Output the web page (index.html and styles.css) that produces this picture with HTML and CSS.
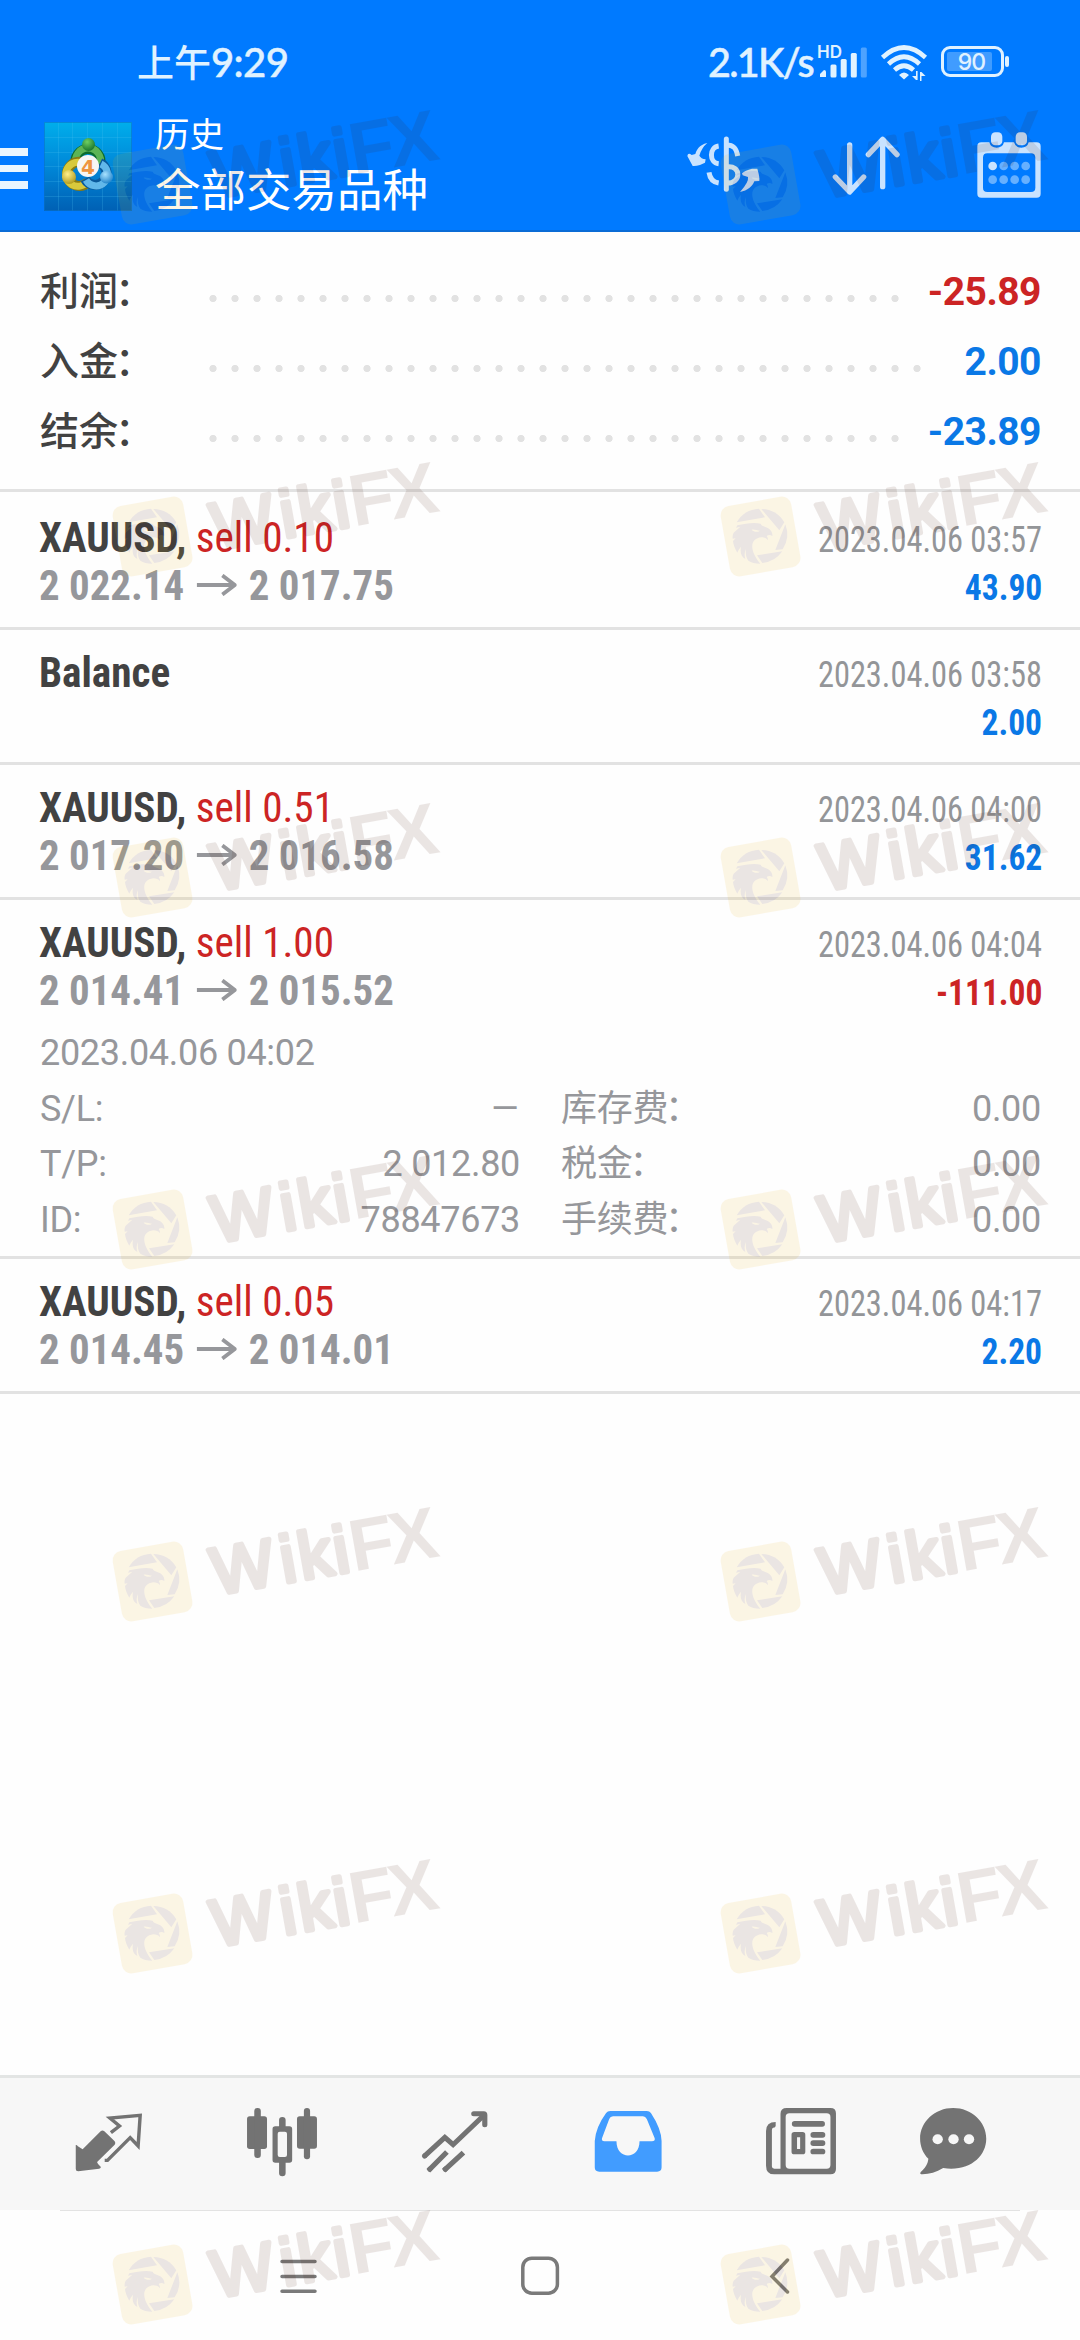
FILE: index.html
```html
<!DOCTYPE html>
<html lang="zh-CN">
<head>
<meta charset="utf-8">
<title>历史</title>
<link rel="stylesheet" href="styles.css">
</head>
<body>
<svg class="defs" width="0" height="0" aria-hidden="true">
  <defs>
    <symbol id="wm" viewBox="0 0 360 160">
      <g class="wm-group">
        <rect class="wm-tile" x="16.800" y="65.800" width="71.500" height="71.500" rx="9.500" transform="rotate(-10 52.5 101.5)"/>
        <g class="wm-ink" transform="scale(.3333)">
          <path d="M86 262A82 82 0 0 1 153 221L171 247Z"/>
          <path d="M160 222A82 82 0 0 1 229 262L214 286Z"/>
          <path d="M232 268A82 82 0 0 1 224 343L202 345Z"/>
          <path d="M223 349A82 82 0 0 1 163 384L147 361Z"/>
          <path fill-rule="evenodd" d="M88 271C112 265 140 261 158 266C161 275 174 274 183 281C191 288 194 295 193 303C186 299 181 300 176 303C179 307 180 311 180 316C176 309 168 307 160 307C142 309 131 320 133 338C135 357 146 372 157 386C141 386 130 382 121 377C114 368 112 356 114 342C109 352 109 362 112 372C99 365 96 352 99 335C94 341 91 345 88 353C80 341 76 328 75 318L83 310L74 311C73 304 74 298 77 293L97 275L84 278ZM131 284C138 291 147 293 156 287C147 287 140 282 131 284Z"/>
        </g>
        <g transform="translate(115 116) rotate(-10)">
          <text class="wm-soft" x="1 70.5 89 124.500" y="-1">Wiki</text>
          <text class="wm-hard" x="141 181" y="0">FX</text>
        </g>
      </g>
    </symbol>
  </defs>
</svg>

<div class="phone">
  <header class="top">
    <div class="status">
      <span class="clock">上午<span class="digits">9:29</span></span>
      <div class="status-right">
        <span class="speed">2.1K/s</span>
        <div class="cell">
          <span class="hd">HD</span>
          <svg width="50" height="36" viewBox="0 0 50 36"><g fill="#e0f2ff"><path d="M1 33V30L5 26Q7 26 7 28V33Z"/><rect x="11.500" y="20.500" width="6" height="13" rx="1.500"/><rect x="21.700" y="15" width="6" height="18.500" rx="1.500"/><rect x="31.800" y="9" width="6" height="24.500" rx="1.500"/><rect opacity=".35" x="41.800" y="3.500" width="6" height="30" rx="1.500"/></g></svg>
        </div>
        <svg class="wifi" width="48" height="38" viewBox="0 0 48 38"><g fill="none" stroke="#e0f2ff" stroke-width="4.600"><path d="M2.500 13.500Q24 -6.500 45.500 13.500"/><path d="M8.500 20Q24 5.500 39.500 20"/><path d="M14.500 26Q24 17.500 33.500 26"/></g><path fill="#e0f2ff" d="M19 31Q24 26 29 31L24 35.500ZM36 27h1.600v9H36l-4-4h4ZM41.500 37H40v-9h1.500l4 4h-4Z"/></svg>
        <div class="battery"><span class="level">90</span></div>
      </div>
    </div>
    <div class="appbar">
      <div class="burger"><i></i><i></i><i></i></div>
      <svg class="logo" width="88" height="89" viewBox="0 0 88 89">
        <defs>
          <linearGradient id="sky" x1="0" y1="0" x2="0" y2="1"><stop offset="0" stop-color="#00aeeb"/><stop offset=".5" stop-color="#0087d8"/><stop offset="1" stop-color="#0060b4"/></linearGradient>
          <radialGradient id="gr" cx=".4" cy=".3" r=".8"><stop offset="0" stop-color="#6fcf62"/><stop offset="1" stop-color="#0f6a26"/></radialGradient>
          <radialGradient id="ye" cx=".4" cy=".3" r=".8"><stop offset="0" stop-color="#fff08a"/><stop offset="1" stop-color="#a89010"/></radialGradient>
          <radialGradient id="bl" cx=".4" cy=".3" r=".8"><stop offset="0" stop-color="#a8e2ff"/><stop offset="1" stop-color="#1279c4"/></radialGradient>
        </defs>
        <rect width="88" height="89" fill="url(#sky)"/>
        <path stroke="#4fc3f0" stroke-opacity=".22" d="M14.500 0V89M28.500 0V89M43.500 0V89M58.500 0V89M73.500 0V89M0 15.500H88M0 30.500H88M0 44.500H88M0 59.500H88M0 74.500H88" fill="none"/>
        <path fill="none" stroke="#0b6b2c" stroke-width="10" d="M32 43A12.500 12.500 0 1 1 56 43"/>
        <path fill="none" stroke="#5cb455" stroke-width="7" d="M32 42A12.500 12.500 0 1 1 56 42"/>
        <path fill="none" stroke="#8a7b12" stroke-width="10" d="M37 40A12 12 0 1 0 44 60"/>
        <path fill="none" stroke="#d8c93c" stroke-width="7" d="M36 40.500A12 12 0 1 0 43 60"/>
        <path fill="none" stroke="#0a5a9c" stroke-width="10" d="M56 41A11.500 11.500 0 1 1 41 57"/>
        <path fill="none" stroke="#62b8ea" stroke-width="7" d="M57 42A11.500 11.500 0 1 1 42 58"/>
        <circle cx="44.500" cy="22.500" r="6.500" fill="url(#gr)"/>
        <circle cx="25" cy="55" r="7" fill="url(#ye)"/>
        <circle cx="62.500" cy="55" r="6.500" fill="url(#bl)"/>
        <circle cx="44" cy="44" r="11" fill="#f7f6f4"/>
        <text class="four" x="44" y="51.500">4</text>
        <rect x=".5" y=".5" width="87" height="88" fill="none" stroke="#0a6fc8" stroke-opacity=".6"/>
      </svg>
      <div class="heads">
        <div class="h-small">历史</div>
        <div class="h-big">全部交易品种</div>
      </div>
      <div class="actions">
        <svg width="74" height="58" viewBox="136 408 222 174"><g fill="none" stroke="#c9e3ff" stroke-width="15"><path d="M231 438C202 442 202 488 231 491"/><path d="M202 517Q206 545 231 549"/><path stroke-linecap="round" d="M254 417V568"/><path d="M254 435C276 435 284 445 288 468M254 501C300 493 300 552 254 549"/></g><path fill="#c9e3ff" d="M197 429C172 434 164 452 161 462L150 465Q139 456 137 468L153 498Q162 499 175 495L190 488L192 478Q178 476 173 467Q180 443 197 429ZM295 576C318 572 332 560 338 544L353 543Q355 533 347 506L331 506Q310 511 301 520L303 526L319 531Q322 546 295 576Z"/></svg>
        <svg width="70" height="62" viewBox="570 404 210 186"><g fill="none" stroke="#c9e3ff" stroke-width="16" stroke-linecap="round" stroke-linejoin="round"><path d="M626 434V574M583 530L626 575L668 530M725 559V418M682 463L725 417L768 463"/></g></svg>
        <svg width="66" height="68" viewBox="1006 392 198 204"><path fill="#c9e3ff" fill-rule="evenodd" d="M1022 426H1046Q1050 442 1068 442Q1086 442 1090 426H1120Q1124 442 1142 442Q1160 442 1164 426H1188Q1200 426 1200 438V580Q1200 592 1188 592H1022Q1010 592 1010 580V438Q1010 426 1022 426ZM1040 459Q1027 459 1027 472V562Q1027 575 1040 575H1171Q1184 575 1184 562V472Q1184 459 1171 459Z"/><g fill="#c9e3ff"><rect x="1051" y="396" width="34" height="39" rx="13"/><rect x="1125" y="396" width="34" height="39" rx="13"/><circle cx="1056" cy="497" r="13"/></g><g fill="#66b0ff"><circle cx="1089" cy="497" r="13"/><circle cx="1122" cy="497" r="13"/><circle cx="1155" cy="497" r="13"/><circle cx="1056" cy="538" r="13"/><circle cx="1089" cy="538" r="13"/><circle cx="1122" cy="538" r="13"/><circle cx="1155" cy="538" r="13"/></g></svg>
      </div>
    </div>
  </header>

  <section class="summary">
    <div class="sum"><span class="sum-label">利润<span class="colon">：</span></span><i class="dots"></i><b class="red">-25.89</b></div>
    <div class="sum"><span class="sum-label">入金<span class="colon">：</span></span><i class="dots long"></i><b class="blue">2.00</b></div>
    <div class="sum"><span class="sum-label">结余<span class="colon">：</span></span><i class="dots"></i><b class="blue">-23.89</b></div>
  </section>

  <main class="deals">
    <article class="deal first">
      <div class="line"><span class="title"><b>XAUUSD,</b> <span class="red">sell 0.10</span></span><time>2023.04.06 03:57</time></div>
      <div class="line"><span class="price"><span>2 022.14</span><svg class="arrow" width="42" height="22" viewBox="0 0 42 22"><path d="M0 11H40M27 1.500L40 11L27 20.500"/></svg><span>2 017.75</span></span><b class="amount blue">43.90</b></div>
    </article>
    <article class="deal">
      <div class="line"><span class="title"><b>Balance</b></span><time>2023.04.06 03:58</time></div>
      <div class="line"><span class="price">&nbsp;</span><b class="amount blue">2.00</b></div>
    </article>
    <article class="deal">
      <div class="line"><span class="title"><b>XAUUSD,</b> <span class="red">sell 0.51</span></span><time>2023.04.06 04:00</time></div>
      <div class="line"><span class="price"><span>2 017.20</span><svg class="arrow" width="42" height="22" viewBox="0 0 42 22"><path d="M0 11H40M27 1.500L40 11L27 20.500"/></svg><span>2 016.58</span></span><b class="amount blue">31.62</b></div>
    </article>
    <article class="deal">
      <div class="line"><span class="title"><b>XAUUSD,</b> <span class="red">sell 1.00</span></span><time>2023.04.06 04:04</time></div>
      <div class="line"><span class="price"><span>2 014.41</span><svg class="arrow" width="42" height="22" viewBox="0 0 42 22"><path d="M0 11H40M27 1.500L40 11L27 20.500"/></svg><span>2 015.52</span></span><b class="amount red">-111.00</b></div>
      <div class="details">
        <div class="opened">2023.04.06 04:02</div>
        <div class="pair"><span>S/L:</span><span class="dash">–</span></div>
        <div class="pair"><span>库存费<span class="colon">：</span></span><span>0.00</span></div>
        <div class="pair"><span>T/P:</span><span>2 012.80</span></div>
        <div class="pair"><span>税金<span class="colon">：</span></span><span>0.00</span></div>
        <div class="pair"><span>ID:</span><span>78847673</span></div>
        <div class="pair"><span>手续费<span class="colon">：</span></span><span>0.00</span></div>
      </div>
    </article>
    <article class="deal">
      <div class="line"><span class="title"><b>XAUUSD,</b> <span class="red">sell 0.05</span></span><time>2023.04.06 04:17</time></div>
      <div class="line"><span class="price"><span>2 014.45</span><svg class="arrow" width="42" height="22" viewBox="0 0 42 22"><path d="M0 11H40M27 1.500L40 11L27 20.500"/></svg><span>2 014.01</span></span><b class="amount blue">2.20</b></div>
    </article>
  </main>

  <nav class="tabs">
    <svg viewBox="211 140 209 210" preserveAspectRatio="none"><path fill="#737373" d="M219 254Q222 253 225 258L239 267L292 212Q297 208 302 213L332 243Q336 248 332 253L281 305Q281 309 292 320Q292 324 287 325L226 333Q219 333 219 326Z"/><path fill="none" stroke="#737373" stroke-width="10" d="M321 217L346 197L318 173L406 165L400 257L377 232L311 300H303"/></svg>
    <svg viewBox="711 140 209 210" preserveAspectRatio="none"><g fill="#737373"><rect x="714" y="168" width="58" height="98" rx="8"/><rect x="735" y="143" width="19" height="150" rx="9"/><rect x="859" y="168" width="58" height="97" rx="8"/><rect x="879" y="143" width="18" height="154" rx="9"/><path fill-rule="evenodd" d="M807 198V179Q807 170 816.500 170Q826 170 826 179V198H837Q845 198 845 206V299Q845 307 837 307H826V339Q826 348 816.500 348Q807 348 807 339V307H796Q788 307 788 299V206Q788 198 796 198ZM809 214Q803 214 803 220V284Q803 290 809 290H824Q830 290 830 284V220Q830 214 824 214Z"/></g></svg>
    <svg viewBox="1214 140 209 210" preserveAspectRatio="none"><g fill="none" stroke="#737373" stroke-width="15" stroke-linecap="round"><path stroke-linecap="butt" d="M1229 288L1289 231L1313 253L1404 163"/><path d="M1230 287L1231 286M1373 160H1402Q1405 160 1405 164V193"/><path stroke-linecap="butt" d="M1241 331L1295 275M1286 331L1343 277"/><path d="M1245 327L1246 326M1290 327L1291 326"/></g></svg>
    <svg viewBox="149 140 209 210" preserveAspectRatio="none"><path fill="#419cff" fill-rule="evenodd" d="M202 152H308Q316 152 320 158Q350 205 351 242V321Q351 334 338 334H170Q157 334 157 321V242Q160 200 190 158Q194 152 202 152ZM210 168Q202 168 199 176L178 234Q176 243 185 243H220C220 300 287 300 287 243H323Q333 243 331 234L308 176Q304 168 297 168Z"/></svg>
    <svg viewBox="653 140 209 210" preserveAspectRatio="none"><g fill="#737373"><path fill-rule="evenodd" d="M716 143H843Q859 143 859 159V326Q859 342 843 342H680Q656 342 656 316V212Q656 185 684 185V196Q684 202 677 202Q673 202 673 210V318Q673 325 680 325H698V160Q698 143 716 143ZM724 159Q713 159 713 170V314Q713 325 724 325H832Q843 325 843 314V170Q843 159 832 159Z"/><rect x="731" y="182" width="96" height="17" rx="8"/><path fill-rule="evenodd" d="M738 215H762Q770 215 770 223V274Q770 282 762 282H738Q730 282 730 274V223Q730 215 738 215ZM746 231V266H755V231Z"/><rect x="785" y="215" width="43" height="17" rx="8"/><rect x="785" y="240" width="43" height="17" rx="8"/><rect x="785" y="265" width="43" height="17" rx="8"/></g></svg>
    <svg class="chat" viewBox="1094 140 209 210" preserveAspectRatio="none"><path fill="#737373" d="M1199 143C1252 143 1295 184 1295 235C1295 288 1246 335 1170 323C1150 336 1130 341 1110 342Q1100 342 1105 335C1125 316 1126 303 1127 295C1111 279 1103 256 1103 235C1103 184 1146 143 1199 143Z"/><g fill="#f7f7f7"><circle cx="1154" cy="237" r="15"/><circle cx="1200" cy="237" r="15"/><circle cx="1245" cy="237" r="15"/></g></svg>
  </nav>
  <div class="rule"></div>
  <footer class="sysnav">
    <svg width="40" height="40" viewBox="0 0 40 40"><path stroke-linecap="round" d="M3 5.500H36M3 20.500H36M3 35.200H36"/></svg>
    <svg width="40" height="40" viewBox="0 0 40 40"><rect x="2.800" y="2.200" width="34.600" height="35" rx="9"/></svg>
    <svg width="40" height="40" viewBox="0 0 40 40"><path stroke-linecap="round" d="M27.500 4L12 20.500L27.500 36"/></svg>
  </footer>

  <div class="marks">
    <svg style="top:83px"><use href="#wm"/></svg><svg class="r" style="top:83px"><use href="#wm"/></svg>
    <svg style="top:435px"><use href="#wm"/></svg><svg class="r" style="top:435px"><use href="#wm"/></svg>
    <svg style="top:776px"><use href="#wm"/></svg><svg class="r" style="top:776px"><use href="#wm"/></svg>
    <svg style="top:1128px"><use href="#wm"/></svg><svg class="r" style="top:1128px"><use href="#wm"/></svg>
    <svg style="top:1480px"><use href="#wm"/></svg><svg class="r" style="top:1480px"><use href="#wm"/></svg>
    <svg style="top:1832px"><use href="#wm"/></svg><svg class="r" style="top:1832px"><use href="#wm"/></svg>
    <svg style="top:2183px"><use href="#wm"/></svg><svg class="r" style="top:2183px"><use href="#wm"/></svg>
  </div>
</div>
</body>
</html>
```
FILE: styles.css
```css
* { box-sizing: border-box; }
body { margin: 0; background: #fefefe; font-family: Roboto, "Noto Sans CJK SC", sans-serif; }
svg { display: block; flex: none; }
.defs { position: absolute; }
.phone { position: relative; width: 1080px; height: 2340px; overflow: hidden; display: flex; flex-direction: column; background: #fefefe; }
.red { color: #cc2424; }
.blue { color: #0a78e6; }

.top { height: 232px; background: #007aff; border-bottom: 2px solid #0a6cd6; color: #fff; }
.status { height: 112px; padding: 44px 76px 0 137px; display: flex; justify-content: space-between; align-items: flex-start; color: #e0f2ff; }
.clock { font: 500 37px/36px Lato, "Noto Sans CJK SC", sans-serif; white-space: nowrap; }
.digits { font-size: 40px; letter-spacing: -.6px; -webkit-text-stroke: .5px #e0f2ff; }
.status-right { display: flex; align-items: flex-start; }
.speed { font: 500 39.500px/36px Lato, sans-serif; letter-spacing: -1.700px; width: 111px; white-space: nowrap; -webkit-text-stroke: .5px #e0f2ff; }
.cell { position: relative; width: 50px; margin-right: 11px; }
.hd { position: absolute; left: -2px; top: 1px; font: 600 17px/14px Inter, sans-serif; }
.wifi { margin-right: 13px; }
.battery { position: relative; width: 63px; height: 31px; margin-top: 2px; border: 3px solid #e0f2ff; border-radius: 9px; padding: 3px; }
.battery::after { content: ""; position: absolute; right: -8px; top: 7px; width: 4px; height: 11px; border-radius: 2px; background: #e0f2ff; }
.level { display: block; width: 45px; height: 19px; background: #409cff; border-radius: 2px; font: 500 23px/20px Inter, sans-serif; text-align: center; letter-spacing: -1px; padding-left: 4px; }

.appbar { display: flex; align-items: flex-start; height: 118px; padding-right: 38px; }
.burger { width: 44px; padding-top: 36px; display: flex; flex-direction: column; gap: 9px; }
.burger i { display: block; width: 28px; height: 7.5px; background: #eaf6ff; }
.logo { margin-top: 9.500px; }
.four { font: 700 20px "DejaVu Sans", sans-serif; fill: #ee9440; text-anchor: middle; }
.heads { margin-left: 23px; flex: 1; white-space: nowrap; }
.h-small { font-size: 34.500px; line-height: 44px; padding-top: 1px; }
.h-big { font-size: 45.500px; line-height: 60px; margin-top: 5px; }
.actions { display: flex; align-items: flex-start; padding-top: 19px; }
.actions svg { margin: 5px 0 0; }
.actions svg:nth-child(1) { margin-right: 70.500px; }
.actions svg:nth-child(2) { margin: 4px 75px 0 0; }
.actions svg:nth-child(3) { margin: 0; }

.summary { padding: 25px 39px 22px 40px; border-bottom: 3px solid #e2e2e2; color: #424242; }
.sum { display: flex; height: 70px; line-height: 70px; font-size: 39px; }
.sum-label { width: 162px; font-weight: 500; white-space: nowrap; }
.colon { margin-left: -3px; }
.dots { width: 704px; background: radial-gradient(circle at 11px 41.500px, #e2e2e2 3.200px, transparent 4px) 0 0 / 22px 70px repeat-x; }
.dots.long { width: 726px; }
.sum b { margin-left: auto; font-weight: 700; letter-spacing: -.5px; }

.deal { padding: 18px 38px 18px 39px; border-bottom: 3px solid #e2e2e2; }
.deal.first { padding-top: 21px; }
.line { display: flex; justify-content: space-between; align-items: baseline; height: 48px; line-height: 48px; font-family: "Roboto Condensed", Roboto, sans-serif; font-stretch: 75%; white-space: nowrap; }
.title { font-size: 43px; color: #424242; transform: scaleX(.957); transform-origin: 0 0; }
.title .red { color: #cc2424; }
.line time { font-size: 36px; color: #939598; transform: scaleX(.9); transform-origin: 100% 0; }
.amount { font-size: 36px; transform: scaleX(.93); transform-origin: 100% 0; }
.price { display: flex; align-items: center; font-size: 43px; font-weight: 700; color: #96979b; transform: scaleX(.95); transform-origin: 0 0; }
.arrow { margin: 0 13px 0 13px; fill: none; stroke: #96979b; stroke-width: 4px; }
.details { display: grid; grid-template-columns: 480px 480px; column-gap: 41px; grid-auto-rows: 55.67px; line-height: 55.67px; margin: 12px 0 -11px 1px; font-size: 36px; letter-spacing: -.3px; color: #96979b; }
.opened { grid-column: 1 / 3; }
.pair { display: flex; justify-content: space-between; white-space: nowrap; }
.dash { transform: scaleX(1.3); transform-origin: 100% 0; }

.tabs { margin-top: auto; height: 135px; padding: 28.500px 0 0 72.500px; border-top: 3px solid #e3e5e4; background: #f7f7f7; display: flex; }
.tabs svg { width: 72px; height: 70px; margin-right: 101px; }
.tabs .chat { margin-left: -21px; }
.rule { height: 1px; margin: 0 60px; background: #e3e3e3; flex: none; }
.sysnav { height: 129px; flex: none; padding: 45px 280px 0 279px; display: flex; justify-content: space-between; }
.sysnav svg { fill: none; stroke: #7a7a7a; stroke-width: 3.500px; }

.marks { position: absolute; inset: 0; pointer-events: none; }
.marks svg { position: absolute; left: 100px; width: 360px; height: 160px; }
.marks svg.r { left: 708px; }
.wm-group { opacity: .1; }
.wm-tile { fill: #ebaf0f; }
.wm-ink { fill: #461405; }
.wm-soft { font: 400 66px "Liberation Sans", sans-serif; fill: #461405; stroke: #461405; stroke-width: 5px; stroke-linejoin: round; }
.wm-hard { font: 700 73px "Liberation Sans", sans-serif; fill: #461405; }
```
